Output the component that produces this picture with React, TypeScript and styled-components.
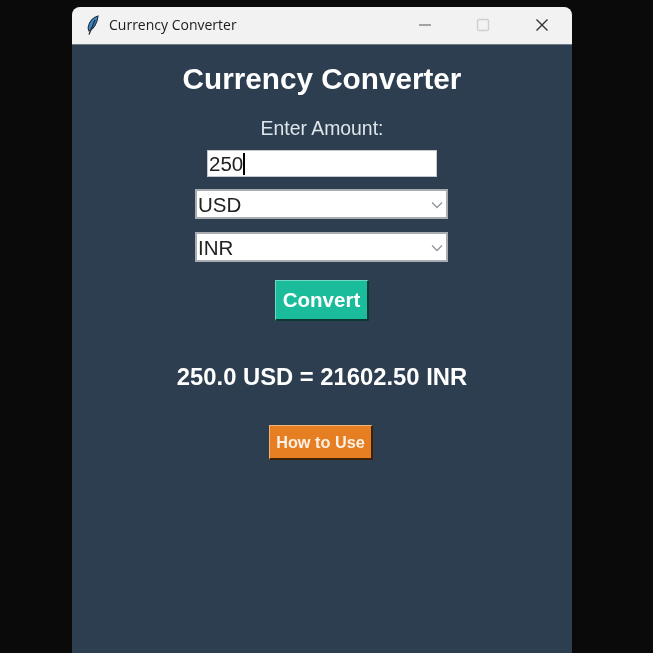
import React, { FC, ReactElement } from 'react'
import styled, { createGlobalStyle } from 'styled-components'

const GlobalStyle = createGlobalStyle`
  html, body {
    margin: 0;
    padding: 0;
    height: 100%;
    background: #0a0a0a;
    overflow: hidden;
  }
`

const Desktop = styled.div`
  width: 653px;
  height: 653px;
  padding: 7px 0 0 72px;
  box-sizing: border-box;
  overflow: hidden;
`

const Window = styled.div`
  width: 500px;
  height: 660px;
  border-radius: 8px 8px 0 0;
  overflow: hidden;
  background: #2c3e50;
  display: flex;
  flex-direction: column;
  filter: blur(0.35px);
`

const TitleBar = styled.div`
  height: 38px;
  flex: none;
  background: #f2f2f2;
  border-bottom: 1px solid #6f7a85;
  box-sizing: border-box;
  display: flex;
  align-items: center;
  padding: 0 0 2px 12px;
`

const AppIcon = styled.svg`
  width: 16px;
  height: 22px;
  flex: none;
`

const WindowTitle = styled.span`
  font-family: "Open Sans", "Noto Sans", sans-serif;
  font-size: 14px;
  color: #1c1c1c;
  margin-left: 9px;
  flex: 1;
`

const WindowButton = styled.div`
  width: 58px;
  height: 36px;
  display: flex;
  align-items: center;
  justify-content: center;

  &:last-child {
    width: 60px;
  }
`

const Content = styled.div`
  flex: 1;
  display: flex;
  flex-direction: column;
  align-items: center;
  font-family: "Liberation Sans", Arial, sans-serif;
`

const Heading = styled.h1`
  margin: 18px 0 0;
  font-size: 29.7px;
  line-height: 32px;
  font-weight: bold;
  color: #ffffff;
`

const AmountLabel = styled.label`
  margin-top: 21px;
  font-size: 19.4px;
  line-height: 24px;
  color: #dfe6e9;
`

const AmountField = styled.div`
  margin-top: 10px;
  width: 230px;
  height: 27px;
  box-sizing: border-box;
  background: #ffffff;
  border: 1px solid #c4c8cc;
  padding-left: 1px;
  font-size: 20.5px;
  line-height: 25px;
  color: #222222;
  display: flex;
  align-items: center;
`

const Caret = styled.span`
  width: 2px;
  height: 22px;
  background: #000000;
`

const SelectWrap = styled.div<{ $top: number }>`
  position: relative;
  margin: ${props => props.$top}px 1px 0 0;
  width: 253px;
  height: 30px;
`

const Select = styled.select`
  appearance: none;
  width: 100%;
  height: 100%;
  box-sizing: border-box;
  background: #ffffff;
  border: 2px solid #a9adb2;
  border-radius: 0;
  padding: 0 0 0 1px;
  margin: 0;
  font-family: "Liberation Sans", Arial, sans-serif;
  font-size: 20.5px;
  color: #222222;
  outline: none;
`

const Chevron = styled.svg`
  position: absolute;
  right: 5px;
  top: 12px;
  width: 12px;
  height: 8px;
  pointer-events: none;
`

const ActionButton = styled.button<{ $bg: number; $w: number; $h: number; $size: number; $top: number; $right: number }>`
  margin: ${props => props.$top}px ${props => props.$right}px 0 0;
  width: ${props => props.$w}px;
  height: ${props => props.$h}px;
  padding: 0;
  box-sizing: border-box;
  font-family: "Liberation Sans", Arial, sans-serif;
  font-weight: bold;
  font-size: ${props => props.$size}px;
  color: ${props => (props.$bg === 1 ? '#ffffff' : '#fdf0e4')};
  background: ${props => (props.$bg === 1 ? '#1abc9c' : '#e67e22')};
  border-style: solid;
  border-width: 1px 2px 2px 1px;
  border-color: ${props => (props.$bg === 1 ? '#6fd8c3 #0c3a32 #0c3a32 #6fd8c3' : '#f2b27a #3d2208 #3d2208 #f2b27a')};
`

const Result = styled.div`
  margin-top: 42px;
  font-size: 23.8px;
  line-height: 28px;
  font-weight: bold;
  color: #ffffff;
`

const App: FC = (): ReactElement => {
    return (
        <Desktop>
            <GlobalStyle />
            <Window>
                <TitleBar>
                    <AppIcon viewBox="0 0 16 22">
                        <path d="M14 2 C9 3 5 8 4.2 13 C4 15 4.4 16 5 17 C9.5 15.5 13.5 9 14 2 Z" fill="#3f86c6" stroke="#1f2d3d" strokeWidth="1.1" />
                        <path d="M11 6 L5 20.5" stroke="#1f2d3d" strokeWidth="1.3" fill="none" />
                    </AppIcon>
                    <WindowTitle>Currency Converter</WindowTitle>
                    <WindowButton>
                        <svg width="14" height="12" viewBox="0 0 14 12">
                            <path d="M1 6 H13" stroke="#555555" strokeWidth="1.2" />
                        </svg>
                    </WindowButton>
                    <WindowButton>
                        <svg width="14" height="14" viewBox="0 0 14 14">
                            <rect x="1.5" y="1.5" width="11" height="11" rx="1.5" fill="none" stroke="#cfcfcf" strokeWidth="1.4" />
                        </svg>
                    </WindowButton>
                    <WindowButton>
                        <svg width="16" height="16" viewBox="0 0 16 16">
                            <path d="M2.5 2.5 L13.5 13.5 M13.5 2.5 L2.5 13.5" stroke="#333333" strokeWidth="1.4" />
                        </svg>
                    </WindowButton>
                </TitleBar>
                <Content>
                    <Heading>Currency Converter</Heading>
                    <AmountLabel>Enter Amount:</AmountLabel>
                    <AmountField>250<Caret /></AmountField>
                    <SelectWrap $top={12}>
                        <Select defaultValue="USD">
                            <option>USD</option>
                        </Select>
                        <Chevron viewBox="0 0 12 8">
                            <path d="M1 1.5 L6 6.5 L11 1.5" fill="none" stroke="#8f959b" strokeWidth="1.3" />
                        </Chevron>
                    </SelectWrap>
                    <SelectWrap $top={13}>
                        <Select defaultValue="INR">
                            <option>INR</option>
                        </Select>
                        <Chevron viewBox="0 0 12 8">
                            <path d="M1 1.5 L6 6.5 L11 1.5" fill="none" stroke="#8f959b" strokeWidth="1.3" />
                        </Chevron>
                    </SelectWrap>
                    <ActionButton $bg={1} $w={94} $h={41} $size={20.5} $top={18} $right={0}>Convert</ActionButton>
                    <Result>250.0 USD = 21602.50 INR</Result>
                    <ActionButton $bg={2} $w={104} $h={35} $size={16.3} $top={34} $right={2}>How to Use</ActionButton>
                </Content>
            </Window>
        </Desktop>
    )
}

export default App
